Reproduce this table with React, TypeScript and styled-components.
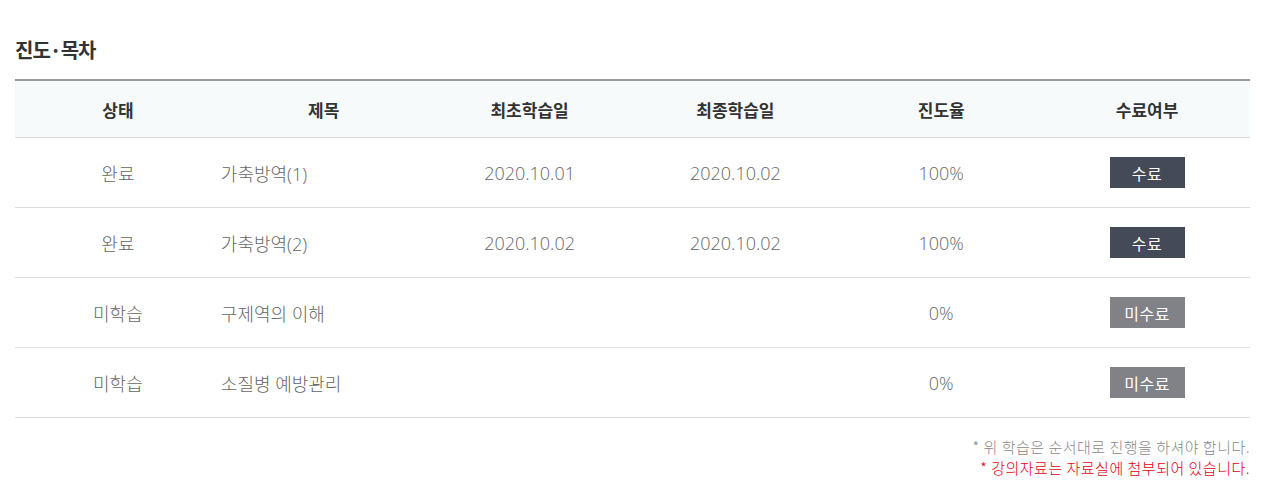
import React from "react";
import styled, { createGlobalStyle } from "styled-components";

const GlobalStyle = createGlobalStyle`
  html, body { margin: 0; padding: 0; background: #fff; }
  body { font-family: "Noto Sans CJK KR", "Noto Sans", sans-serif; }
`;

const Page = styled.div`
  padding: 36px 22px 0 15px;
  width: 1272px;
  box-sizing: border-box;
`;

const Title = styled.h2`
  margin: 0 0 15px;
  font-size: 20px;
  font-weight: 700;
  color: #333;
  line-height: 28px;
  letter-spacing: -1px;
`;

const Table = styled.table`
  width: 1235px;
  border-collapse: collapse;
  table-layout: fixed;
  border-top: 2px solid #999;
`;

const HeadRow = styled.tr`
  background: #f7fafb;
`;

const Th = styled.th`
  height: 56px;
  padding: 0;
  font-size: 17px;
  font-weight: 700;
  color: #333;
  text-align: center;
  border-bottom: 1px solid #ddd;
`;

const Td = styled.td<{ $left?: boolean }>`
  height: 69px;
  padding: 0;
  font-family: "Open Sans", "Noto Sans CJK KR", sans-serif;
  font-size: 18px;
  font-weight: 300;
  color: #666;
  text-align: ${(p) => (p.$left ? "left" : "center")};
  border-bottom: 1px solid #ddd;
`;

const Badge = styled.span<{ $done: boolean }>`
  display: inline-flex;
  align-items: center;
  justify-content: center;
  width: 75px;
  height: 31px;
  background: ${(p) => (p.$done ? "#454a58" : "#808287")};
  color: #fff;
  font-family: "Noto Sans CJK KR", sans-serif;
  font-size: 16px;
  font-weight: 400;
  letter-spacing: 0.5px;
`;

const Notes = styled.div`
  margin-top: 18px;
  width: 1235px;
  display: flex;
  flex-direction: column;
  align-items: flex-end;
`;

const Note = styled.p<{ $red?: boolean }>`
  margin: 0;
  font-size: 15px;
  line-height: 21px;
  font-weight: 300;
  letter-spacing: 0.5px;
  color: ${(p) => (p.$red ? "#e60012" : "#888")};
`;

const rows = [
  { status: "완료", title: "가축방역(1)", first: "2020.10.01", last: "2020.10.02", rate: "100%", done: true },
  { status: "완료", title: "가축방역(2)", first: "2020.10.02", last: "2020.10.02", rate: "100%", done: true },
  { status: "미학습", title: "구제역의 이해", first: "", last: "", rate: "0%", done: false },
  { status: "미학습", title: "소질병 예방관리", first: "", last: "", rate: "0%", done: false },
];

export default function App() {
  return (
    <>
      <GlobalStyle />
      <Page>
        <Title>진도·목차</Title>
        <Table>
          <thead>
            <HeadRow>
              <Th>상태</Th>
              <Th>제목</Th>
              <Th>최초학습일</Th>
              <Th>최종학습일</Th>
              <Th>진도율</Th>
              <Th>수료여부</Th>
            </HeadRow>
          </thead>
          <tbody>
            {rows.map((r, i) => (
              <tr key={i}>
                <Td>{r.status}</Td>
                <Td $left>{r.title}</Td>
                <Td>{r.first}</Td>
                <Td>{r.last}</Td>
                <Td>{r.rate}</Td>
                <Td>
                  <Badge $done={r.done}>{r.done ? "수료" : "미수료"}</Badge>
                </Td>
              </tr>
            ))}
          </tbody>
        </Table>
        <Notes>
          <Note>* 위 학습은 순서대로 진행을 하셔야 합니다.</Note>
          <Note $red>* 강의자료는 자료실에 첨부되어 있습니다.</Note>
        </Notes>
      </Page>
    </>
  );
}
